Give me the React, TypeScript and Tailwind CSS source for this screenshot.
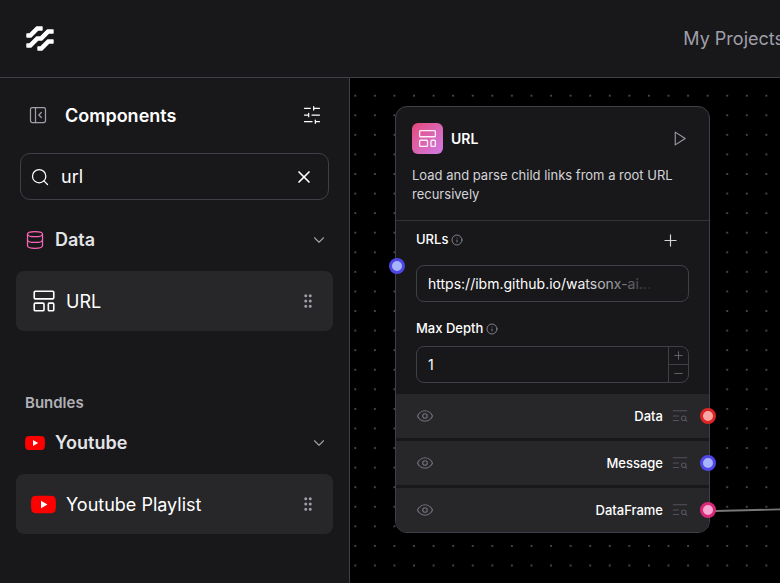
import { useId, type ReactNode } from "react";
import { ChevronDown, Database, GripVertical, Info, Minus, Plus, Search, X } from "lucide-react";

type IconProps = { size: number; className?: string; stroke?: number };

function Stroke({ size, className, stroke = 1.5, children }: IconProps & { children: ReactNode }) {
  return (
    <svg
      width={size}
      height={size}
      viewBox="0 0 24 24"
      fill="none"
      stroke="currentColor"
      strokeWidth={stroke}
      strokeLinecap="round"
      strokeLinejoin="round"
      className={className}
      aria-hidden="true"
    >
      {children}
    </svg>
  );
}

const TemplateIcon = (p: IconProps) => (
  <Stroke {...p}>
    <rect x="3" y="3" width="18" height="7" rx="1" />
    <rect x="3" y="14" width="9" height="7" rx="1" />
    <rect x="16" y="14" width="5" height="7" rx="1" />
  </Stroke>
);

const PanelIcon = (p: IconProps) => (
  <Stroke {...p}>
    <rect x="3" y="3" width="18" height="18" rx="2" />
    <path d="M9 3v18M16 15l-3-3 3-3" />
  </Stroke>
);

const SlidersIcon = (p: IconProps) => (
  <Stroke {...p}>
    <path d="M21 4h-7M10 4H3M21 12h-9M8 12H3M21 20h-5M12 20H3M14 2v4M8 10v4M16 18v4" />
  </Stroke>
);

const PlayIcon = (p: IconProps) => (
  <Stroke {...p}>
    <path d="m6 3 14 9-14 9z" />
  </Stroke>
);

const EyeIcon = (p: IconProps) => (
  <Stroke {...p}>
    <path d="M2 12s3-7 10-7 10 7 10 7-3 7-10 7-10-7-10-7Z" />
    <circle cx="12" cy="12" r="3" />
  </Stroke>
);

const InspectIcon = (p: IconProps) => (
  <Stroke {...p}>
    <path d="M21 5H3M10 12H3M10 18H3M21 19l-2-2" />
    <circle cx="17" cy="15" r="3" />
  </Stroke>
);

function YoutubeIcon({ size }: { size: number }) {
  return (
    <svg width={size} height={size} viewBox="0 0 24 24" className="shrink-0" aria-hidden="true">
      <path
        fill="#ff0000"
        d="M3.2 3.9C6 3.4 18 3.4 20.8 3.9C22.3 4.2 23.2 5.1 23.5 6.5C24.1 9.3 24.1 14.7 23.5 17.5C23.2 18.9 22.3 19.8 20.8 20.1C18 20.6 6 20.6 3.2 20.1C1.7 19.8 0.8 18.9 0.5 17.5C-0.1 14.7 -0.1 9.3 0.5 6.5C0.8 5.1 1.7 4.2 3.2 3.9Z"
      />
      <path fill="#fff" d="M9.6 8.4v7.2l6.2-3.6z" />
    </svg>
  );
}

function Logo() {
  return (
    <svg width="30" height="28" viewBox="0 0 30 28" fill="#fff" stroke="#fff" strokeWidth="1.4" strokeLinejoin="round" aria-hidden="true">
      <path d="M2 9h2.6l7-7h5.4v3h-4l-7 7H2z" />
      <path d="M2 19h2.6l7-7h3.8l7-7h5.6v3h-4.2l-7 7h-3.8l-7 7H2z" />
      <path d="M13 22h2.6l7-7H28v3h-4l-7 7h-4z" />
    </svg>
  );
}

function CategoryRow({ icon, name }: { icon: ReactNode; name: string }) {
  return (
    <button type="button" className="flex h-10 w-full items-center pl-[9px] pr-[5px] text-left">
      <span className="flex w-[30px] items-center">{icon}</span>
      <span className="flex-1 text-lg font-semibold text-zinc-200">{name}</span>
      <ChevronDown size={18} strokeWidth={1.5} className="text-zinc-400" />
    </button>
  );
}

function ComponentCard({ icon, name }: { icon: ReactNode; name: string }) {
  return (
    <button type="button" className="flex h-[60px] w-full items-center rounded-lg bg-[#27272a] pl-[15px] pr-4 text-left">
      <span className="flex w-[35px] items-center">{icon}</span>
      <span className="flex-1 pt-px text-lg text-white">{name}</span>
      <GripVertical size={18} className="text-zinc-400" />
    </button>
  );
}

const outputs = [
  { name: "Data", handle: "border-[#dc2626] bg-[#fca5a5]" },
  { name: "Message", handle: "border-[#4f46e5] bg-[#a5b4fc]" },
  { name: "DataFrame", handle: "border-[#db2777] bg-[#f9a8d4]" },
];

function Sidebar() {
  return (
    <aside className="w-[350px] shrink-0 border-r border-zinc-700 bg-[#18181b] px-4 pt-[15px]">
      <div className="flex h-11 items-center pl-3 pr-2">
        <button type="button" aria-label="Collapse sidebar" className="text-zinc-400">
          <PanelIcon size={20} />
        </button>
        <h2 className="flex-1 pt-0.5 pl-[17px] text-lg font-semibold text-white">Components</h2>
        <button type="button" aria-label="Component settings" className="mr-[3px] text-white">
          <SlidersIcon size={20} />
        </button>
      </div>
      <div className="mx-1 mt-4 flex h-[47px] items-center rounded-[10px] border border-zinc-700 pr-2.5 pl-[9px]">
        <Search size={20} strokeWidth={1.5} className="shrink-0 text-white" />
        <input
          aria-label="Search components"
          defaultValue="url"
          className="ml-[11px] min-w-0 flex-1 bg-transparent text-lg text-white outline-none"
        />
        <button type="button" aria-label="Clear search" className="mr-1 text-white">
          <X size={20} strokeWidth={2} />
        </button>
      </div>
      <div className="pt-5">
        <CategoryRow icon={<Database size={20} strokeWidth={1.5} className="text-pink-400" />} name="Data" />
        <div className="mt-[11px]">
          <ComponentCard icon={<TemplateIcon size={26} className="text-white" />} name="URL" />
        </div>
      </div>
      <div className="pt-[60px]">
        <h3 className="pl-[9px] text-[15px] leading-6 font-semibold text-[#b1b1b5]">Bundles</h3>
        <div className="mt-2">
          <CategoryRow icon={<YoutubeIcon size={20} />} name="Youtube" />
        </div>
        <div className="mt-[11px]">
          <ComponentCard icon={<YoutubeIcon size={25} />} name="Youtube Playlist" />
        </div>
      </div>
    </aside>
  );
}

function UrlNode() {
  const urlId = useId();
  const depthId = useId();
  return (
    <article className="absolute top-7 left-[45px] w-[315px] rounded-xl border border-zinc-700 bg-[#18181b] text-[13px]">
      <header className="border-b border-zinc-700/70 px-4 pt-[15px] pb-4">
        <div className="flex h-[33px] items-center">
          <span className="flex size-[31px] items-center justify-center rounded-md bg-linear-to-br from-[#e5457a] to-[#cf7ae6] text-pink-50">
            <TemplateIcon size={21} />
          </span>
          <h3 className="flex-1 pl-2 text-sm font-semibold text-white">URL</h3>
          <button type="button" aria-label="Run component" className="mr-[5px] text-zinc-400">
            <PlayIcon size={17} />
          </button>
        </div>
        <p className="mt-[11px] leading-[19px] text-zinc-300">Load and parse child links from a root URL recursively</p>
      </header>

      <div className="px-5 pt-[9px]">
        <div className="relative">
          <div className="flex h-5 items-center">
            <label htmlFor={urlId} className="font-medium text-white">URLs</label>
            <Info size={12} strokeWidth={1.5} className="ml-[3px] text-zinc-400" />
            <button type="button" aria-label="Add URL" className="mr-[9px] ml-auto text-zinc-300">
              <Plus size={19} strokeWidth={1.5} />
            </button>
          </div>
          <div className="relative mt-[15px]">
            <input
              id={urlId}
              defaultValue="https://ibm.github.io/watsonx-ai..."
              className="h-[37px] w-full rounded-lg border border-zinc-700 bg-transparent px-[11px] text-sm text-white outline-none"
            />
            <span className="pointer-events-none absolute inset-y-1 right-8 w-20 bg-linear-to-r from-transparent to-[#18181b]" />
          </div>
          <button
            type="button"
            aria-label="URLs input"
            className="absolute top-7 -left-[27px] size-4 rounded-full border-3 border-[#4f46e5] bg-[#a5b4fc]"
          />
        </div>
        <div className="mt-[17px]">
          <div className="flex h-5 items-center">
            <label htmlFor={depthId} className="font-medium text-white">Max Depth</label>
            <Info size={12} strokeWidth={1.5} className="ml-[3px] text-zinc-400" />
          </div>
          <div className="mt-[7px] flex h-[37px] overflow-hidden rounded-lg border border-zinc-700">
            <input
              id={depthId}
              defaultValue="1"
              inputMode="numeric"
              className="min-w-0 flex-1 bg-transparent px-[11px] text-sm text-white outline-none"
            />
            <div className="flex w-5 flex-col border-l border-zinc-700 text-zinc-500">
              <button type="button" aria-label="Increase depth" className="flex flex-1 items-center justify-center border-b border-zinc-700">
                <Plus size={13} strokeWidth={1.5} />
              </button>
              <button type="button" aria-label="Decrease depth" className="flex flex-1 items-center justify-center">
                <Minus size={13} strokeWidth={1.5} />
              </button>
            </div>
          </div>
        </div>
      </div>

      <ul className="mt-[11px] flex flex-col gap-[3px]">
        {outputs.map((o) => (
          <li key={o.name} className="relative flex h-11 items-center bg-[#27272a] pr-5 pl-5 last:rounded-b-[11px]">
            <button type="button" aria-label={`Hide ${o.name} output`} className="text-zinc-500">
              <EyeIcon size={18} />
            </button>
            <span className="ml-auto pt-0.5 font-medium text-white">{o.name}</span>
            <button type="button" aria-label={`Inspect ${o.name} output`} className="ml-2 text-zinc-600">
              <InspectIcon size={18} />
            </button>
            <button
              type="button"
              aria-label={`${o.name} handle`}
              className={`absolute top-[14px] -right-[7px] size-4 rounded-full border-3 ${o.handle}`}
            />
          </li>
        ))}
      </ul>
    </article>
  );
}

function Canvas() {
  return (
    <main className="relative min-w-0 flex-1 overflow-hidden bg-black">
      <svg className="absolute inset-0 size-full" aria-hidden="true">
        <defs>
          <pattern id="dots" x="-4.5" y="7.9" width="19.575" height="19.575" patternUnits="userSpaceOnUse">
            <circle cx="9.8" cy="9.8" r="1" fill="#5a5a60" />
          </pattern>
        </defs>
        <rect width="100%" height="100%" fill="url(#dots)" />
        <path d="M359 433C390 433 410 431 470 431" fill="none" stroke="#777" strokeWidth="1.8" />
      </svg>
      <UrlNode />
    </main>
  );
}

export default function App() {
  return (
    <div className="flex h-screen flex-col overflow-hidden bg-[#18181b] font-['Inter',sans-serif]">
      <header className="flex h-[78px] shrink-0 items-center border-b border-zinc-700 pl-[25px]">
        <a href="#home" aria-label="Home">
          <Logo />
        </a>
        <nav className="ml-auto -mr-1 shrink-0">
          <a href="#projects" className="text-lg whitespace-nowrap text-zinc-400">My Projects</a>
        </nav>
      </header>
      <div className="flex min-h-0 flex-1">
        <Sidebar />
        <Canvas />
      </div>
    </div>
  );
}
